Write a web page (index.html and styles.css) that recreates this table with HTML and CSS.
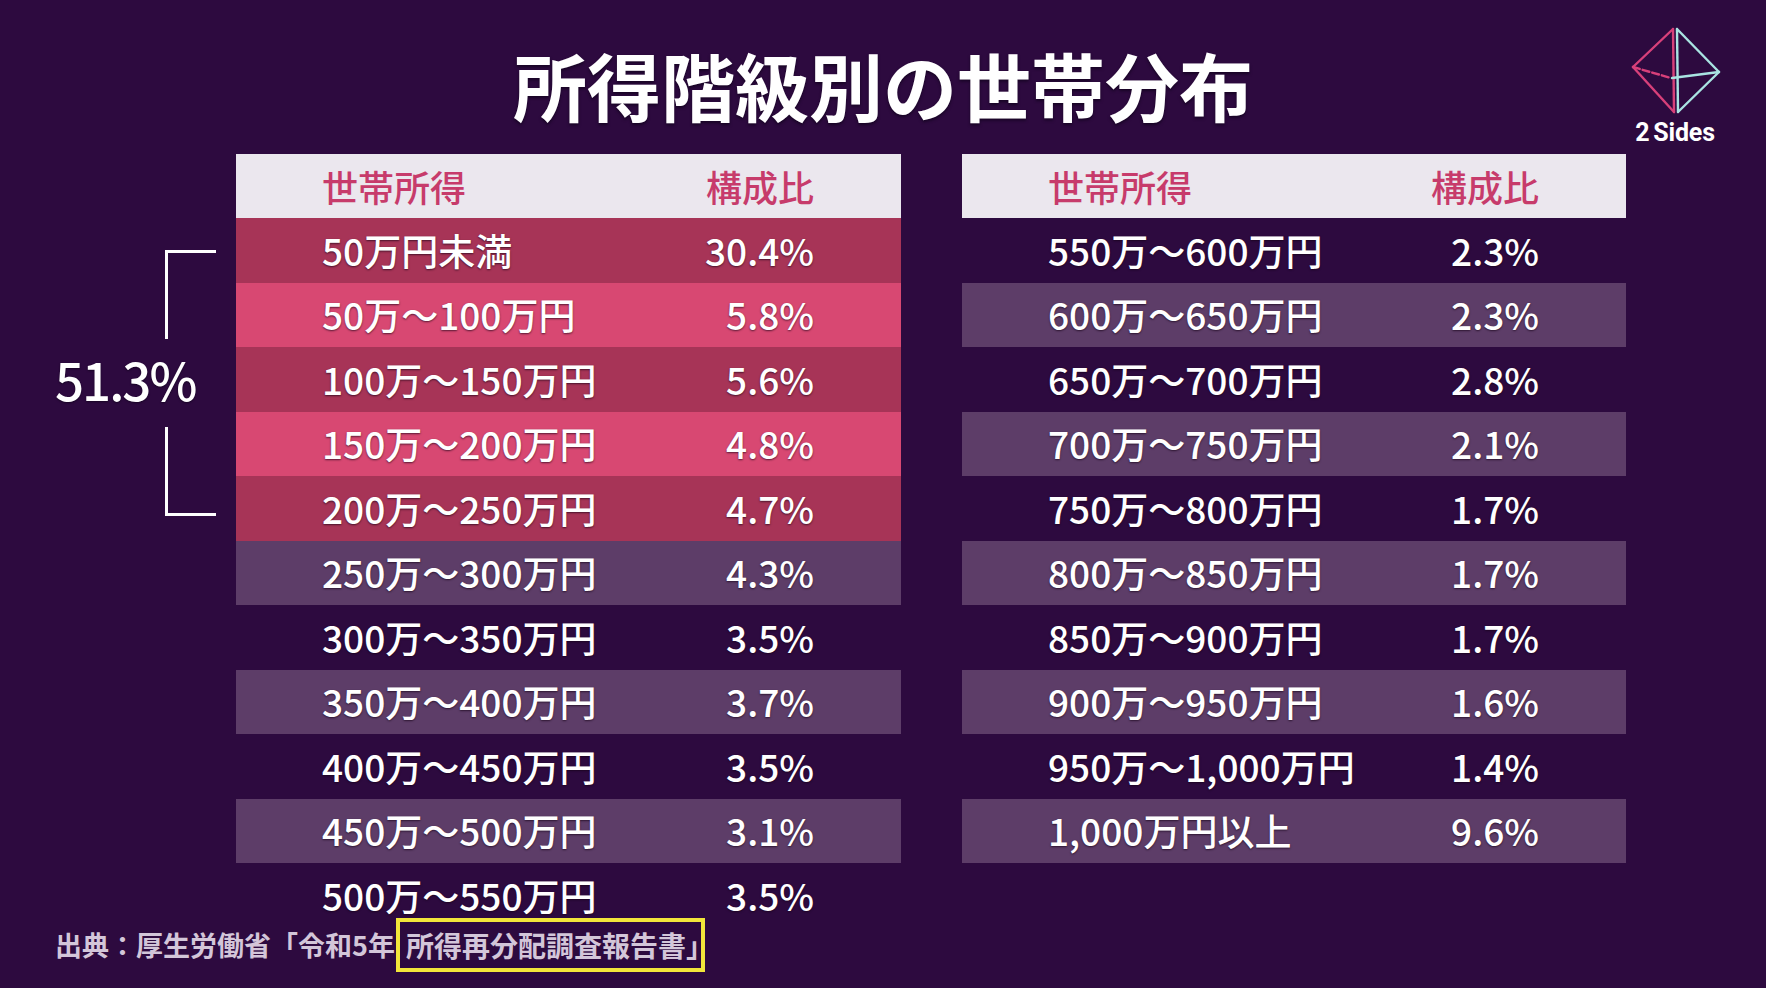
FILE: index.html
```html
<!DOCTYPE html>
<html lang="ja">
<head>
<meta charset="utf-8">
<title>所得階級別の世帯分布</title>
<link rel="stylesheet" href="styles.css">
</head>
<body>
<div class="page">
  <header class="header">
    <h1 class="title">所得階級別の世帯分布</h1>
    <div class="logo">
      <svg class="logo-mark" width="110" height="100" viewBox="0 0 110 100">
        <g fill="none" stroke-linejoin="round" stroke-linecap="round">
          <g stroke="#d8407a" stroke-width="2.4">
            <line x1="53" y1="10" x2="13" y2="48"/>
            <line x1="13" y1="48" x2="54" y2="93"/>
            <line x1="53" y1="10" x2="54" y2="93"/>
            <line x1="13" y1="48" x2="51" y2="59" stroke-dasharray="7 3"/>
          </g>
          <g stroke="#a9e4e2" stroke-width="2.4">
            <line x1="57" y1="10" x2="99" y2="53"/>
            <line x1="99" y1="53" x2="58" y2="93"/>
            <line x1="57" y1="10" x2="58" y2="93"/>
            <line x1="52" y1="59" x2="99" y2="53"/>
          </g>
        </g>
      </svg>
      <div class="logo-text">2<span class="sp"></span>Sides</div>
    </div>
  </header>

  <main class="main">
    <div class="annot">
      <div class="brace">
        <div class="brace-top"></div>
        <div class="brace-label">51.3%</div>
        <div class="brace-bot"></div>
      </div>
    </div>

    <section class="table">
      <div class="row head"><span>世帯所得</span><span>構成比</span></div>
      <div class="row rose"><span>50万円未満</span><span>30.4%</span></div>
      <div class="row pink"><span>50万～100万円</span><span>5.8%</span></div>
      <div class="row rose"><span>100万～150万円</span><span>5.6%</span></div>
      <div class="row pink"><span>150万～200万円</span><span>4.8%</span></div>
      <div class="row rose"><span>200万～250万円</span><span>4.7%</span></div>
      <div class="row stripe"><span>250万～300万円</span><span>4.3%</span></div>
      <div class="row"><span>300万～350万円</span><span>3.5%</span></div>
      <div class="row stripe"><span>350万～400万円</span><span>3.7%</span></div>
      <div class="row"><span>400万～450万円</span><span>3.5%</span></div>
      <div class="row stripe"><span>450万～500万円</span><span>3.1%</span></div>
      <div class="row"><span>500万～550万円</span><span>3.5%</span></div>
    </section>

    <section class="table right">
      <div class="row head"><span>世帯所得</span><span>構成比</span></div>
      <div class="row"><span>550万～600万円</span><span>2.3%</span></div>
      <div class="row stripe"><span>600万～650万円</span><span>2.3%</span></div>
      <div class="row"><span>650万～700万円</span><span>2.8%</span></div>
      <div class="row stripe"><span>700万～750万円</span><span>2.1%</span></div>
      <div class="row"><span>750万～800万円</span><span>1.7%</span></div>
      <div class="row stripe"><span>800万～850万円</span><span>1.7%</span></div>
      <div class="row"><span>850万～900万円</span><span>1.7%</span></div>
      <div class="row stripe"><span>900万～950万円</span><span>1.6%</span></div>
      <div class="row"><span>950万～1,000万円</span><span>1.4%</span></div>
      <div class="row stripe"><span>1,000万円以上</span><span>9.6%</span></div>
    </section>
  </main>

  <footer class="footer">
    <span class="src">出典：厚生労働省「令和5年</span><span class="hl">所得再分配調査報告書<span class="close">」</span></span>
  </footer>
</div>
</body>
</html>
```

FILE: styles.css
```css
html, body {
  margin: 0;
  padding: 0;
}

body {
  background: #2d0a3f;
  width: 1766px;
  height: 988px;
  overflow: hidden;
  font-family: "Noto Sans CJK JP", "Noto Sans", sans-serif;
  color: #ffffff;
}

.page {
  position: relative;
  width: 1766px;
  height: 988px;
}

.header {
  height: 154px;
  display: flex;
  justify-content: center;
  align-items: flex-start;
}

.title {
  margin: 0;
  padding-top: 47px;
  font-size: 74px;
  line-height: 1;
  font-weight: 700;
  letter-spacing: 0;
  color: #ffffff;
  text-shadow: 0 2px 3px rgba(10, 0, 20, 0.6);
}

.logo {
  position: absolute;
  left: 1620px;
  top: 19px;
  width: 110px;
  display: flex;
  flex-direction: column;
  align-items: center;
}

.logo-mark {
  display: block;
}

.logo-text {
  margin-top: 1px;
  font-family: "Roboto", "Liberation Sans", sans-serif;
  font-weight: 700;
  font-size: 25px;
  line-height: 26px;
  color: #ffffff;
  letter-spacing: -0.2px;
}

.logo-text .sp {
  display: inline-block;
  width: 4px;
}

.main {
  display: flex;
  align-items: flex-start;
}

.annot {
  width: 236px;
  flex: none;
}

.brace {
  margin-top: 96px;
  display: flex;
  flex-direction: column;
}

.brace-top {
  margin-left: 165px;
  width: 48px;
  height: 86px;
  border-top: 3px solid #ffffff;
  border-left: 3px solid #ffffff;
}

.brace-label {
  height: 88px;
  line-height: 80px;
  margin-left: 55px;
  font-size: 51px;
  font-weight: 500;
  letter-spacing: -2px;
  text-shadow: 0 1px 2px rgba(10, 0, 20, 0.6);
}

.brace-bot {
  margin-left: 165px;
  width: 48px;
  height: 86px;
  border-bottom: 3px solid #ffffff;
  border-left: 3px solid #ffffff;
}

.table {
  width: 665px;
  flex: none;
  display: flex;
  flex-direction: column;
}

.table.right {
  width: 664px;
  margin-left: 61px;
}

.row {
  height: 64.5px;
  display: flex;
  align-items: center;
  justify-content: space-between;
  padding: 0 87px 0 86px;
  font-size: 37px;
  font-weight: 500;
  line-height: 1;
  color: #ffffff;
  text-shadow: 0 1px 2px rgba(20, 0, 20, 0.65);
  white-space: nowrap;
}

.row.head {
  height: 64px;
  background: #ebe7ee;
  color: #c73b6b;
  font-size: 36px;
  text-shadow: none;
}

.row.rose {
  background: #a73457;
}

.row.pink {
  background: #d84872;
}

.row.stripe {
  background: #5d3d68;
}

.footer {
  margin-top: -10px;
  padding-left: 55px;
  display: flex;
  align-items: center;
  font-size: 27px;
  font-weight: 700;
  color: #d3c6d9;
  line-height: 1;
}

.hl {
  display: inline-flex;
  align-items: center;
  height: 46px;
  padding: 0 0 0 6px;
  margin-left: 1px;
  border: 4px solid #f2e63a;
  font-size: 28px;
  color: #d3c6d9;
}

.hl .close {
  margin-right: -13px;
}
```
